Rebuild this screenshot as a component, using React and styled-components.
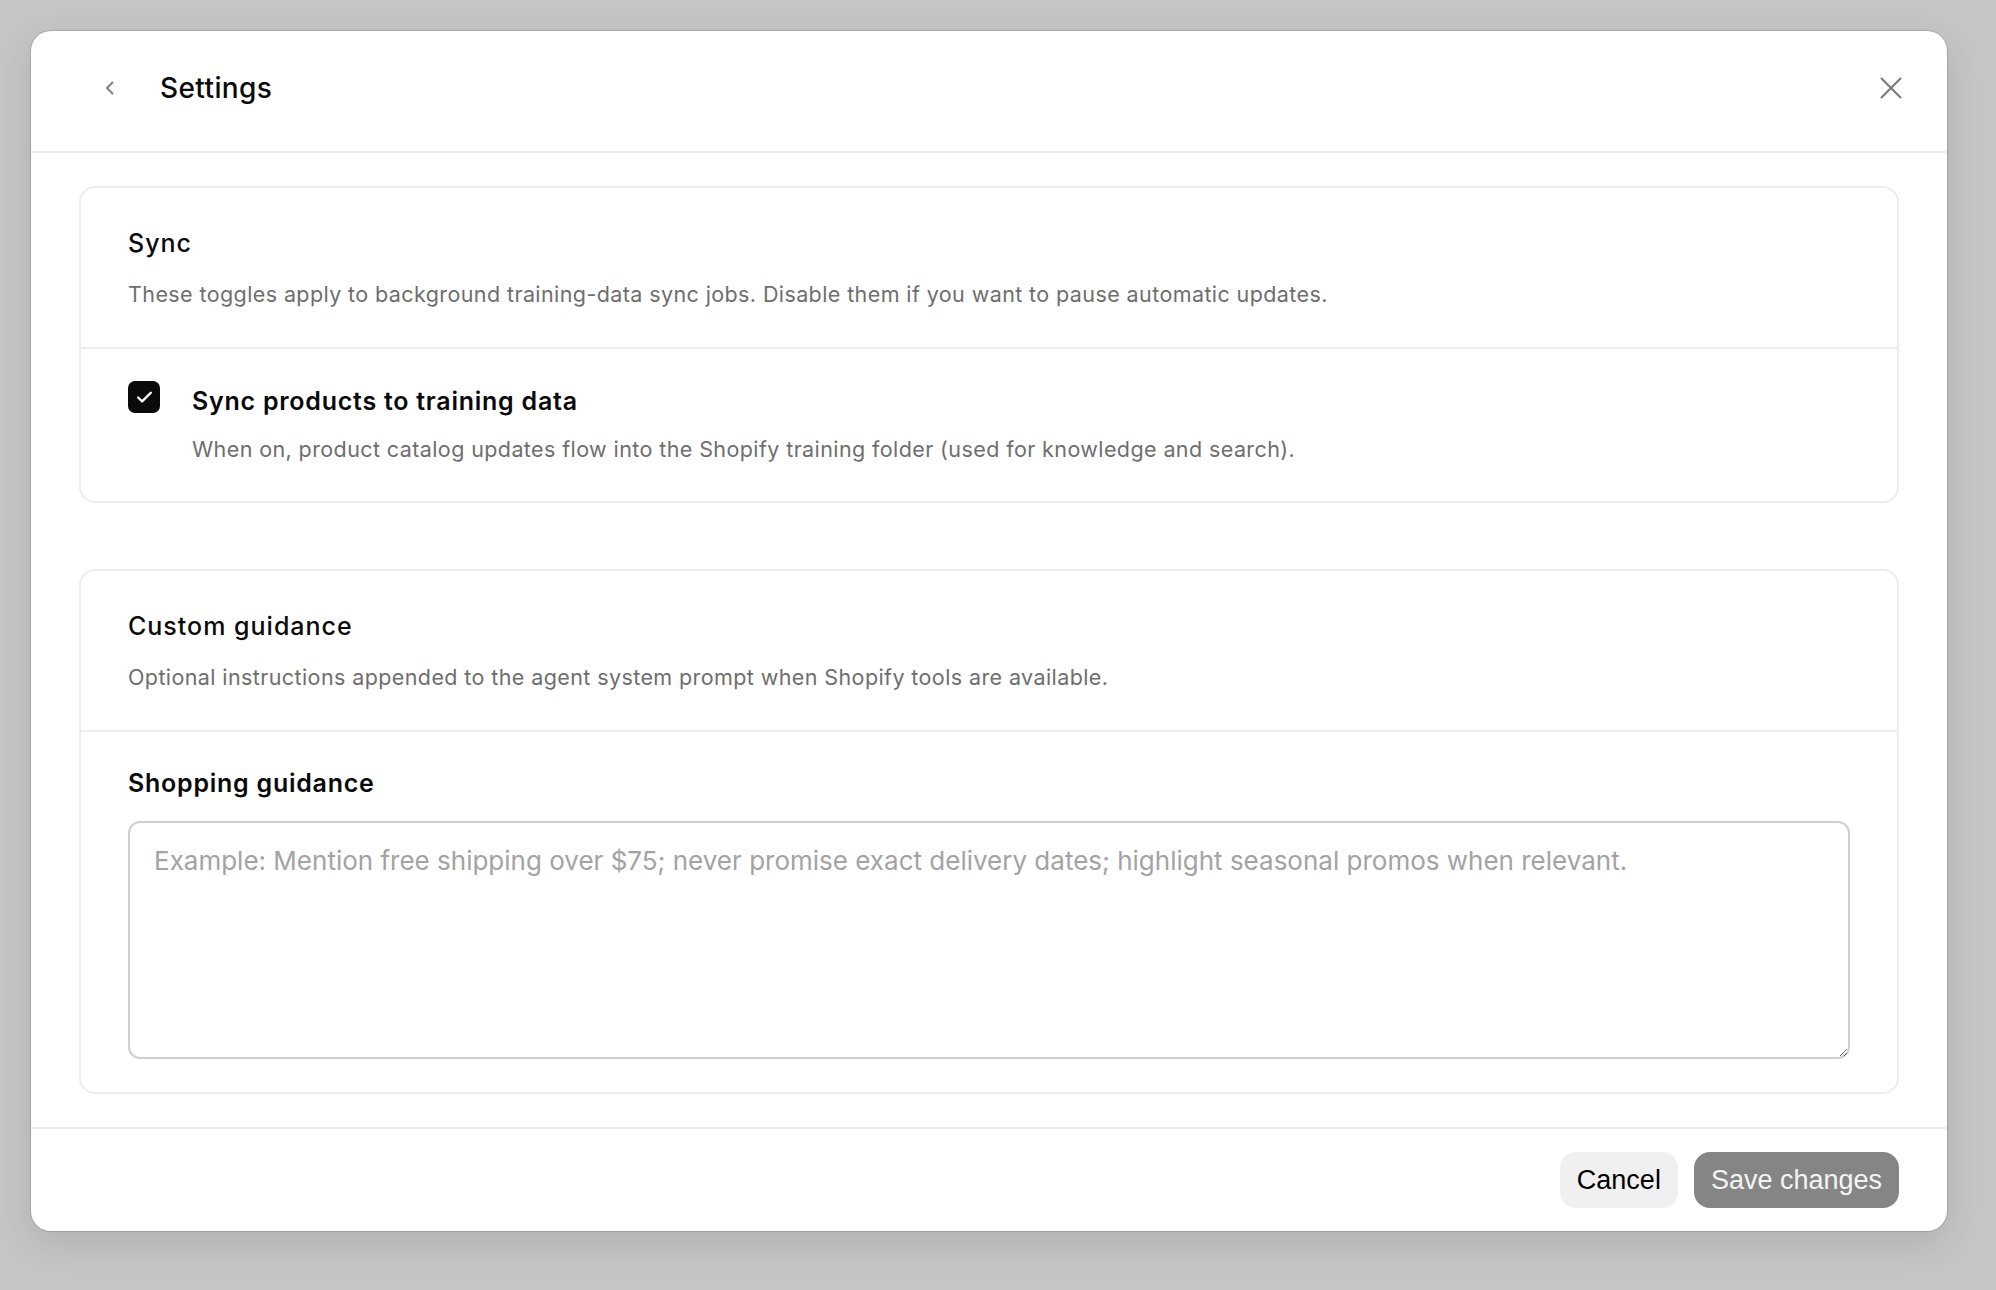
import React from 'react';
import styled, { createGlobalStyle } from 'styled-components';

const GlobalStyle = createGlobalStyle`
  html, body {
    margin: 0;
    padding: 0;
    background: #c6c6c6;
  }
  body {
    font-family: Inter, "Noto Sans", sans-serif;
    color: #0a0a0a;
  }
  * {
    box-sizing: border-box;
  }
`;

const Page = styled.div`
  padding: 31px;
  min-height: 1290px;
`;

const Modal = styled.div`
  width: 1916px;
  height: 1200px;
  background: #ffffff;
  border-radius: 20px;
  box-shadow: 0 0 0 1px rgba(0, 0, 0, 0.12), 0 12px 40px rgba(0, 0, 0, 0.12);
  display: flex;
  flex-direction: column;
  overflow: hidden;
`;

const Header = styled.header`
  height: 122px;
  flex-shrink: 0;
  display: flex;
  align-items: center;
  padding: 0 36px 6px 59px;
  border-bottom: 2px solid #ededed;
`;

const IconButton = styled.button`
  width: 40px;
  height: 40px;
  border: none;
  background: none;
  padding: 0;
  display: flex;
  align-items: center;
  justify-content: center;
  color: ${(p) => p.$color || '#808080'};
  cursor: pointer;
`;

const Title = styled.h1`
  margin: 0 0 0 30px;
  flex: 1;
  font-size: 28px;
  line-height: 36px;
  font-weight: 500;
  letter-spacing: 0.4px;
`;

const Content = styled.div`
  flex: 1;
  padding: 33px 48px;
  display: flex;
  flex-direction: column;
  gap: 66px;
`;

const Card = styled.section`
  border: 2px solid #ededed;
  border-radius: 16px;
`;

const CardHead = styled.div`
  padding: 39px 47px 39px;
  border-bottom: 2px solid #ededed;
`;

const CardTitle = styled.h2`
  margin: 0;
  font-size: 25px;
  line-height: 32px;
  font-weight: 500;
  letter-spacing: 1px;
`;

const Description = styled.p`
  margin: ${(p) => p.$top || '21px'} 0 0;
  font-size: 21.5px;
  line-height: 28px;
  letter-spacing: 0.4px;
  color: #6e6e6e;
`;

const CardBody = styled.div`
  padding: ${(p) => p.$pad || '31px 47px 31px'};
`;

const OptionRow = styled.label`
  display: flex;
  gap: 32px;
  align-items: flex-start;
  padding-bottom: 4px;
`;

const Checkbox = styled.span`
  width: 32px;
  height: 32px;
  flex-shrink: 0;
  border-radius: 7px;
  background: #0a0a0a;
  display: flex;
  align-items: center;
  justify-content: center;
  color: #ffffff;
`;

const OptionText = styled.div`
  display: flex;
  flex-direction: column;
`;

const FieldLabel = styled.div`
  font-size: 25px;
  line-height: 40px;
  font-weight: 600;
  letter-spacing: 0.75px;
`;

const TextArea = styled.textarea`
  display: block;
  width: 100%;
  height: 238px;
  margin-top: 18px;
  border: 2px solid #cfcfcf;
  border-radius: 12px;
  padding: 21px 24px;
  font-family: Inter, "Noto Sans", sans-serif;
  font-size: 26px;
  line-height: 34px;
  color: #0a0a0a;
  outline: none;
  resize: vertical;

  &::placeholder {
    color: #a3a3a3;
  }
`;

const Footer = styled.footer`
  flex-shrink: 0;
  border-top: 2px solid #ededed;
  padding: 23px 48px 23px;
  display: flex;
  justify-content: flex-end;
  gap: 16px;
`;

const Button = styled.button`
  height: 56px;
  padding: 0 17px;
  border: none;
  border-radius: 16px;
  font-family: "Liberation Sans", Arial, sans-serif;
  font-size: 27px;
  background: ${(p) => (p.$primary ? '#858585' : '#f0f0f0')};
  color: ${(p) => (p.$primary ? '#f4f4f4' : '#000000')};
  cursor: pointer;
`;

const ChevronLeft = () => (
  <svg width="24" height="24" viewBox="0 0 24 24" fill="none" stroke="currentColor" strokeWidth="2" strokeLinecap="round" strokeLinejoin="round">
    <path d="M14.5 17.5 9 12l5.5-5.5" />
  </svg>
);

const CloseIcon = () => (
  <svg width="22" height="22" viewBox="0 0 22 22" fill="none" stroke="currentColor" strokeWidth="2" strokeLinecap="round">
    <path d="M1.5 1.5l19 19M20.5 1.5l-19 19" />
  </svg>
);

const CheckIcon = () => (
  <svg width="19" height="19" viewBox="0 0 24 24" fill="none" stroke="currentColor" strokeWidth="3" strokeLinecap="round" strokeLinejoin="round">
    <path d="M20 6 9 17l-5-5" />
  </svg>
);

const App = () => {
  return (
    <Page>
      <GlobalStyle />
      <Modal>
        <Header>
          <IconButton aria-label="Back">
            <ChevronLeft />
          </IconButton>
          <Title>Settings</Title>
          <IconButton aria-label="Close" $color="#777777">
            <CloseIcon />
          </IconButton>
        </Header>

        <Content>
          <Card>
            <CardHead>
              <CardTitle>Sync</CardTitle>
              <Description>
                These toggles apply to background training-data sync jobs. Disable them if you want to pause automatic updates.
              </Description>
            </CardHead>
            <CardBody $pad="32px 47px 34px">
              <OptionRow>
                <Checkbox>
                  <CheckIcon />
                </Checkbox>
                <OptionText>
                  <FieldLabel>Sync products to training data</FieldLabel>
                  <Description $top="14px">
                    When on, product catalog updates flow into the Shopify training folder (used for knowledge and search).
                  </Description>
                </OptionText>
              </OptionRow>
            </CardBody>
          </Card>

          <Card>
            <CardHead>
              <CardTitle>Custom guidance</CardTitle>
              <Description>
                Optional instructions appended to the agent system prompt when Shopify tools are available.
              </Description>
            </CardHead>
            <CardBody $pad="31px 47px 33px">
              <FieldLabel>Shopping guidance</FieldLabel>
              <TextArea placeholder="Example: Mention free shipping over $75; never promise exact delivery dates; highlight seasonal promos when relevant." />
            </CardBody>
          </Card>
        </Content>

        <Footer>
          <Button>Cancel</Button>
          <Button $primary>Save changes</Button>
        </Footer>
      </Modal>
    </Page>
  );
};

export default App;
